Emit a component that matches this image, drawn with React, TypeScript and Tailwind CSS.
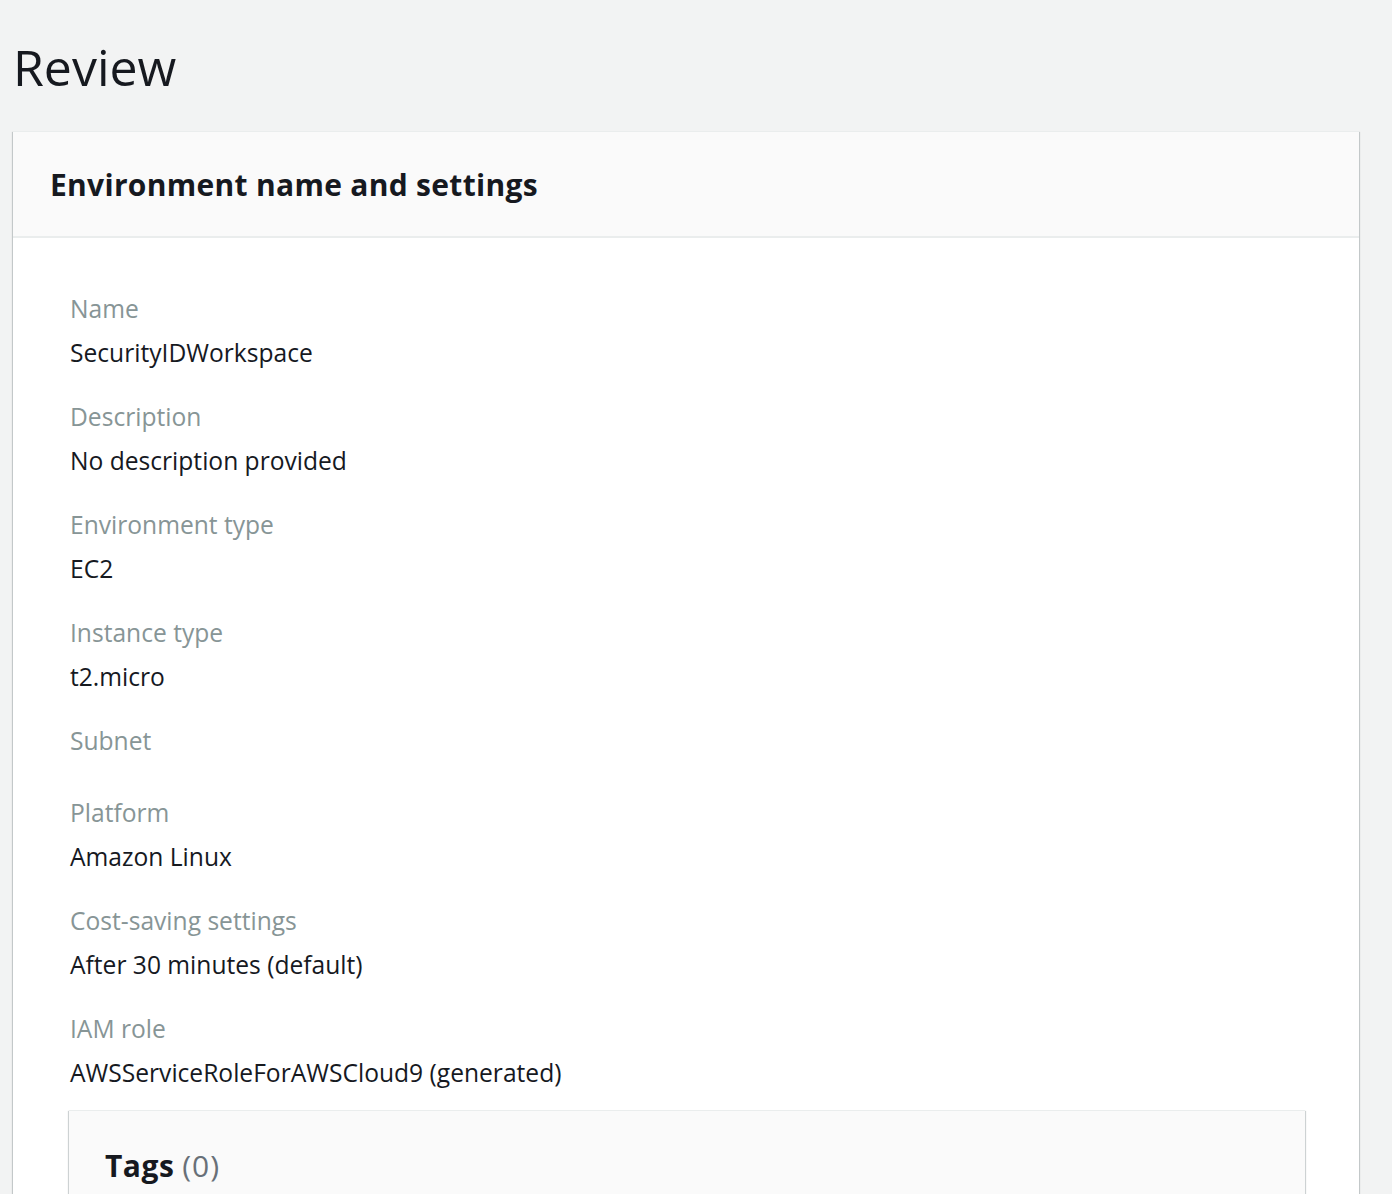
const items: { label: string; value?: string }[] = [
  { label: 'Name', value: 'SecurityIDWorkspace' },
  { label: 'Description', value: 'No description provided' },
  { label: 'Environment type', value: 'EC2' },
  { label: 'Instance type', value: 't2.micro' },
  { label: 'Subnet' },
  { label: 'Platform', value: 'Amazon Linux' },
  { label: 'Cost-saving settings', value: 'After 30 minutes (default)' },
  { label: 'IAM role', value: 'AWSServiceRoleForAWSCloud9 (generated)' },
]

export default function App() {
  return (
    <div className="min-h-screen bg-[#f2f3f3] text-[#16191f] font-['Open_Sans',sans-serif]">
      <div className="pl-[13px] pr-[33px]">
        <h1 className="pt-[37px] pb-[34px] text-[50px] leading-[60px] font-normal">Review</h1>

        <div className="bg-white border-t border-[#eaeded] shadow-[0_1px_1px_0_rgba(0,28,36,0.3),1px_1px_1px_0_rgba(0,28,36,0.15),-1px_1px_1px_0_rgba(0,28,36,0.15)]">
          <div className="bg-[#fafafa] border-b-2 border-[#eaeded] h-[106px] pt-[2px] px-[37px] flex items-center">
            <h2 className="text-[30px] font-bold leading-[36px] tracking-[0.3px]">Environment name and settings</h2>
          </div>

          <div className="px-[57px] pt-[53px] flex flex-col gap-[28px]">
            {items.map((it) => (
              <div key={it.label} className="flex flex-col gap-[8px] text-[24.6px] leading-[36px]">
                <div className="text-[#879596]">{it.label}</div>
                {it.value ? <div>{it.value}</div> : <div className="h-0" />}
              </div>
            ))}

            <div className="mt-[-9px] ml-[-1px] mr-[-3px] bg-white border-t border-[#eaeded] shadow-[0_1px_1px_0_rgba(0,28,36,0.3),1px_1px_1px_0_rgba(0,28,36,0.15),-1px_1px_1px_0_rgba(0,28,36,0.15)]">
              <div className="bg-[#fafafa] h-[110px] px-[36px] flex items-center">
                <h3 className="text-[30px] leading-[36px]">
                  <span className="font-bold tracking-[0.5px]">Tags</span>{' '}
                  <span className="text-[#687078] tracking-[1px]">(0)</span>
                </h3>
              </div>
            </div>
          </div>
        </div>
      </div>
    </div>
  )
}
